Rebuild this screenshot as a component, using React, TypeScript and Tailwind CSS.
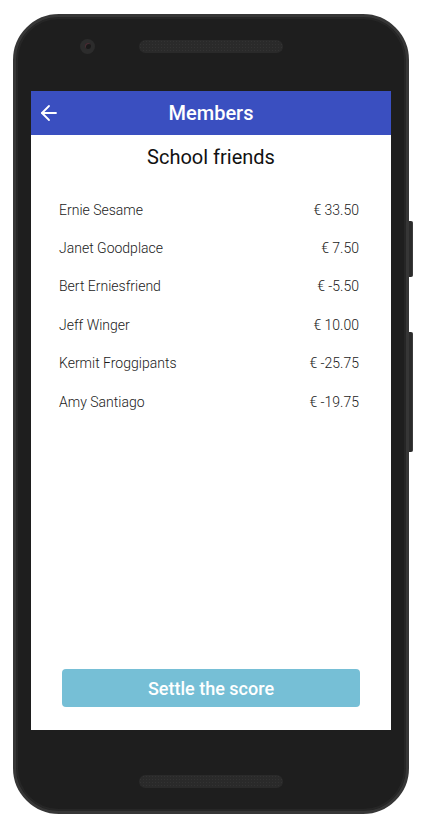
import React from "react";
import { ArrowLeft } from "lucide-react";

const members = [
  { name: "Ernie Sesame", amount: "€ 33.50" },
  { name: "Janet Goodplace", amount: "€ 7.50" },
  { name: "Bert Erniesfriend", amount: "€ -5.50" },
  { name: "Jeff Winger", amount: "€ 10.00" },
  { name: "Kermit Froggipants", amount: "€ -25.75" },
  { name: "Amy Santiago", amount: "€ -19.75" },
];

function Grill() {
  return (
    <div className="w-[144px] h-[13px] rounded-full bg-[#2a2a2a] bg-[radial-gradient(circle,#333333_0.8px,transparent_1px)] bg-[length:3px_3px]" />
  );
}

export default function App() {
  return (
    <div
      className="w-[425px] h-[819px] bg-white pt-[14px] pl-[13px]"
      style={{ fontFamily: "Roboto, 'Noto Sans', sans-serif" }}
    >
      <div className="relative w-[396px] h-[800px]">
        {/* side buttons */}
        <div className="absolute left-[394px] top-[207px] w-[6px] h-[56px] rounded-r-[2px] bg-[#2b2b2b] border-r border-[#3c3c3c]" />
        <div className="absolute left-[394px] top-[318px] w-[6px] h-[120px] rounded-r-[2px] bg-[#2b2b2b] border-r border-[#3c3c3c]" />

        {/* body */}
        <div className="relative w-[396px] h-[800px] rounded-[46px] bg-[#1e1e1e] border-[3px] border-[#363636] shadow-[inset_0_0_0_2px_#262626] flex flex-col">
          {/* top bezel */}
          <div className="h-[74px] flex items-center pl-[64px] gap-[44px] pb-[16px]">
            <div className="w-[15px] h-[15px] rounded-full bg-[#2c2c2c] flex items-center justify-center">
              <div className="w-[6px] h-[6px] rounded-full bg-[#1a1a1a] shadow-[inset_1px_1px_0_#4a2e35]" />
            </div>
            <Grill />
          </div>

          {/* screen */}
          <div className="ml-[15px] w-[360px] h-[639px] bg-white flex flex-col">
            <div className="h-[44px] bg-[#3a4fc0] flex items-center relative">
              <ArrowLeft className="absolute left-[6px] w-[24px] h-[24px] text-white" strokeWidth={1.8} />
              <div className="flex-1 text-center text-white text-[20px] font-medium">Members</div>
            </div>

            <div className="pt-[8px] text-center text-[20px] leading-[28px] text-[#111]">School friends</div>

            <div className="mt-[20px] flex flex-col">
              {members.map((m) => (
                <div
                  key={m.name}
                  className="h-[38.4px] flex items-center justify-between pl-[28px] pr-[32px] text-[14px] font-light text-[#1a1a1a]"
                >
                  <span>{m.name}</span>
                  <span>{m.amount}</span>
                </div>
              ))}
            </div>

            <div className="flex-1" />

            <div className="px-[31px] pb-[23px]">
              <button className="w-full h-[38px] rounded-[4px] bg-[#76bfd6] text-white text-[18px] font-medium">
                Settle the score
              </button>
            </div>
          </div>

          {/* bottom bezel */}
          <div className="flex-1 flex items-center justify-center pt-[22px]">
            <Grill />
          </div>
        </div>
      </div>
    </div>
  );
}
